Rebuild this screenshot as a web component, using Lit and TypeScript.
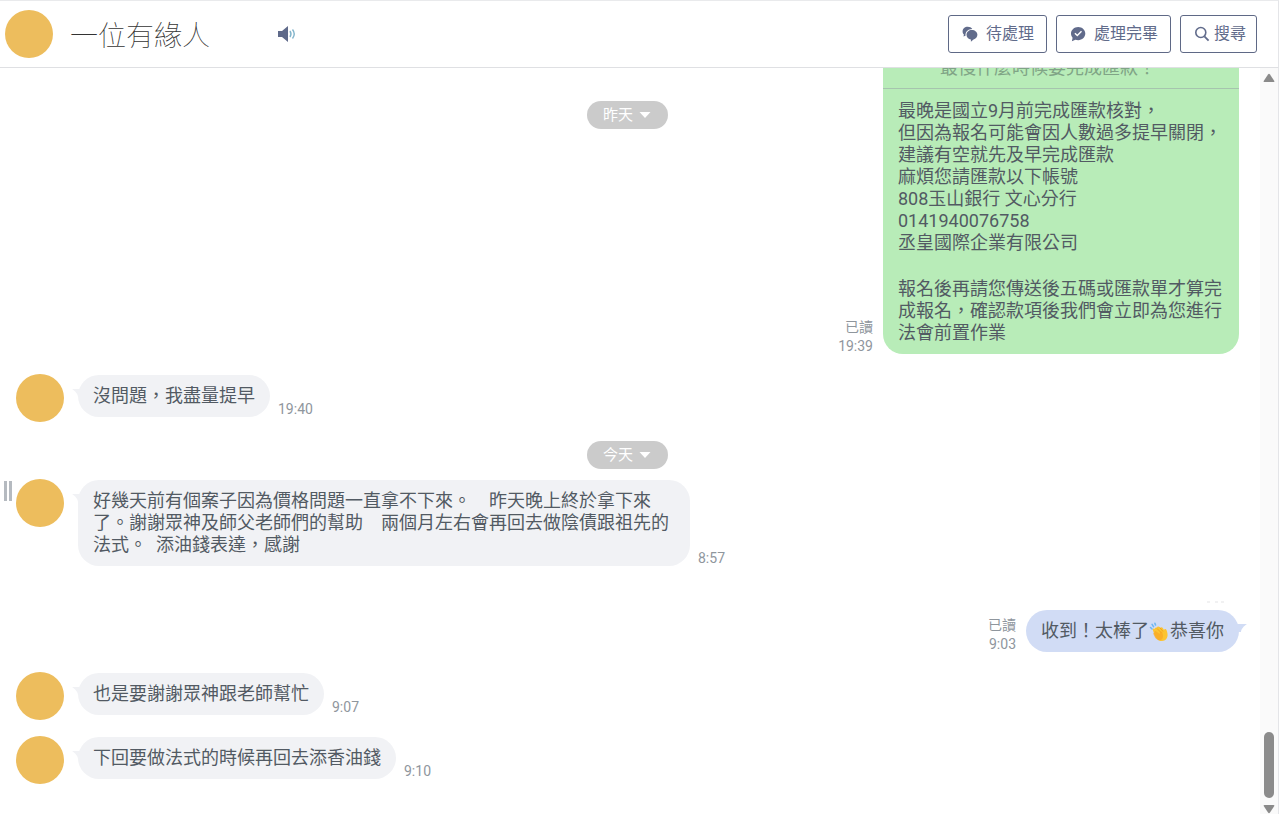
import { LitElement, html, css, svg, nothing, TemplateResult } from "lit";
import { customElement, property } from "lit/decorators.js";

const clap = html`<svg class="emoji" viewBox="0 0 20 20" role="img" aria-label="拍手">
  <path d="M1 5.5 2.6 7M2.6 2.4 4 4.6M5.4 1.2 6 3" stroke="#6fb7f2" stroke-width="1.6" stroke-linecap="round" fill="none" />
  <path d="M3.400 8.200c-.6-1 .5-2 1.400-1.400l.5.4C5 6 6.200 5 7.300 5.600c.4-1.200 1.900-1.500 2.700-.6l.8.8c.8-.9 2-.6 2.500.2l1.200 2c.3-1.200 2.200-1.200 2.600.2.800 2.400 1.600 5 .4 7.600-1.400 3.200-5 4-8 2.600C7 17.300 5.200 13.400 3.400 8.200z" fill="#fcc432" />
  <path d="M4 12.200c-.6-.9.3-1.800 1.200-1.400C4.500 9.600 5.800 8.600 6.800 9.400l3.400 2.700c-.1-1.300.2-2.600 1.500-2.600 1.500 0 1.100 1.700 1.600 2.900.6 1.700.2 4.600-1.900 5.500-2.500 1-4.700-.6-5.800-2.300z" fill="#f9a825" opacity=".75" />
  <path d="M7.500 6.500l4 4M10.500 5.800l3 3.700" stroke="#ee9a1c" stroke-width=".8" fill="none" />
</svg>`;

const icons: Record<string, TemplateResult> = {
  pending: svg`<path d="M5.700.8C2.800.8.6 2.800.6 5.400c0 1.300.5 2.300 1.300 3.100L1.500 10.500l2-.8C3.200 5.800 6 3 10.300 3 9.400 1.600 7.700.8 5.700.8z"/><path d="M9.800 4C6.800 4 4.500 6.100 4.500 8.800c0 2.500 1.900 4.400 4.400 4.800v2.200l2.600-2.300c2.300-.6 3.900-2.400 3.900-4.700C15.400 6.100 12.900 4 9.800 4z"/>`,
  done: svg`<path fill-rule="evenodd" d="M8.200 1C4.200 1 1 3.900 1 7.600c0 1.700.6 3.100 1.600 4.200L1.900 15.200l3.500-1.500c.9.300 1.800.5 2.800.5 4 0 7.100-2.900 7.100-6.600S12.200 1 8.200 1zm-.9 9.500L4.400 7.700l1-1 1.900 1.800 3.700-3.700 1 1z"/>`,
  search: svg`<circle cx="6.800" cy="6.500" r="5" fill="none" stroke="currentColor" stroke-width="1.600"/><path d="M10.400 10.300 14.600 14.600" stroke="currentColor" stroke-width="1.800"/>`,
};

@customElement("chat-message")
class ChatMessage extends LitElement {
  @property() tone: "in" | "green" | "blue" = "in";
  @property() time = "";
  @property({ type: Boolean }) wide = false;

  static styles = css`
    :host { display: block; flex: none; }
    .row { display: flex; align-items: flex-start; gap: 14px; }
    .row.out { justify-content: flex-end; }
    .avatar { width: 48px; height: 48px; border-radius: 50%; background: #edbd5d; flex: none; }
    .group { display: flex; align-items: flex-end; gap: 8px; margin-top: 1px; }
    .out .group { flex-direction: row-reverse; gap: 10px; margin-top: 0; }
    .bubble {
      position: relative; box-sizing: border-box; max-width: 612px; padding: 10px 15px;
      border-radius: 21px; background: #f1f2f5; color: #525a63;
      font-size: 18px; line-height: 22px; white-space: pre-wrap;
    }
    .wide .bubble { width: 612px; }
    .green .bubble { width: 356px; padding: 0; background: #b8ecb8; border-radius: 20px; }
    .blue .bubble { background: #d1dcf5; }
    .tail { position: absolute; top: 14px; left: -6px; width: 14px; height: 8px; fill: #f1f2f5; }
    .blue .tail { left: auto; right: -8px; fill: #d1dcf5; transform: scaleX(-1); }
    .meta {
      margin-bottom: -2px; font-size: 14px; line-height: 19px; color: #8f969d;
      text-align: right; white-space: nowrap;
    }
    .meta span, .meta time { display: block; }
  `;

  render() {
    const out = this.tone !== "in";
    return html`<div class="row ${out ? "out" : ""} ${this.tone} ${this.wide ? "wide" : ""}">
      ${out ? nothing : html`<div class="avatar"></div>`}
      <div class="group">
        <div class="bubble">${this.tone === "green" ? nothing : html`<svg class="tail" viewBox="0 0 14 8" aria-hidden="true"><path d="M0 0H14V8H6C6 5 3 2 0 0z" /></svg>`}<slot></slot></div>
        <div class="meta">${out ? html`<span>已讀</span>` : nothing}<time>${this.time}</time></div>
      </div>
    </div>`;
  }
}

@customElement("app-root")
class AppRoot extends LitElement {
  static styles = css`
    :host {
      display: flex; flex-direction: column; height: 100vh; box-sizing: border-box;
      padding-right: 1px; background: #fff; overflow: hidden;
      font-family: Roboto, "Noto Sans CJK TC", sans-serif;
    }
    .header {
      display: flex; align-items: center; flex: none; box-sizing: border-box; height: 68px;
      padding: 0 21px 0 5px; border-top: 1px solid #e9eaec; border-bottom: 1px solid #dfe0e3;
      border-right: 1px solid #e4e5e8;
    }
    .avatar { width: 48px; height: 48px; border-radius: 50%; background: #edbd5d; }
    .name {
      margin: 0 67px 0 17px; font-size: 28px; line-height: 40px; font-weight: 100; color: #333;
      font-family: "Noto Sans CJK TC", sans-serif;
    }
    .sound { padding: 0; border: 0; background: none; line-height: 0; }
    .sound svg { width: 20px; height: 18px; }
    .actions { display: flex; gap: 9px; margin-left: auto; }
    .action {
      display: flex; align-items: center; gap: 8px; box-sizing: border-box; height: 38px; padding: 0 12px 0 13px;
      border: 1px solid #5f6986; border-radius: 3px; background: #fff; color: #616b8b;
      font: 400 16px/20px Roboto, "Noto Sans CJK TC", sans-serif;
    }
    .action.search { gap: 4px; padding: 0 10px 0 13px; }
    .action svg { width: 16px; height: 16px; fill: currentColor; }
    .body { position: relative; display: flex; flex: 1; min-height: 0; border-right: 1px solid #e4e5e8; }
    .log {
      display: flex; flex-direction: column; justify-content: flex-end; flex: 1; min-width: 0;
      box-sizing: border-box; padding: 0 21px 30px 16px; overflow: hidden;
    }
    .quote {
      padding: 12px 15px 9px 57px; border-bottom: 1px solid #a6c4ae; color: #80a486;
      line-height: 22px;
    }
    .notice { padding: 11px 15px 10px; }
    .notice p { margin: 0; }
    .notice p + p { margin-top: 24px; }
    .log .quick { margin-top: 20px; }
    .log .today { margin-top: 19px; }
    .log .story { margin-top: 10px; }
    .log .reply { margin-top: 44px; }
    .log .thanks { margin-top: 20px; }
    .log .next { margin-top: 16px; }
    .sticky { position: absolute; top: 33px; left: 16px; right: 39px; display: flex; justify-content: center; }
    .day {
      display: flex; align-items: center; align-self: center; flex: none; gap: 6px; height: 28px;
      padding: 0 17px 0 16px; border: 0; border-radius: 14px; background: #cbcbcb; color: #fff;
      font: 400 15px/20px Roboto, "Noto Sans CJK TC", sans-serif;
    }
    .day svg { width: 12px; height: 6px; fill: #fff; }
    .handle { position: absolute; top: 413px; left: 4px; width: 2px; height: 20px; border: solid #b5bac0; border-width: 0 3px; }
    .more { position: absolute; top: -9px; right: 14px; width: 18px; height: 2px; fill: #f1f1f2; }
    .emoji { width: 21px; height: 20px; vertical-align: -5px; }
    .track {
      display: flex; flex-direction: column; align-items: center; flex: none; box-sizing: border-box;
      width: 18px; padding-top: 5px; background: #fafafa;
    }
    .track svg { width: 12px; height: 10px; flex: none; fill: #8a8a8a; }
    .thumb { width: 10px; height: 66px; margin: auto 0 6px; border-radius: 5px; background: #8b8b8b; }
  `;

  private day(label: string, cls = "") {
    return html`<button class="day ${cls}">${label}<svg viewBox="0 0 12 6" aria-hidden="true"><path d="M.5 0h11L6 6z" /></svg></button>`;
  }

  private action(icon: string, label: string) {
    return html`<button class="action ${icon}"><svg viewBox="0 0 16 16" aria-hidden="true">${icons[icon]}</svg>${label}</button>`;
  }

  render() {
    return html`
      <header class="header">
        <div class="avatar"></div>
        <h1 class="name">一位有緣人</h1>
        <button class="sound" aria-label="提示音">
          <svg viewBox="0 0 20 18"><path d="M1 6h4l6-5v16l-6-5H1z" fill="#5f6a8a" /><path d="M13 6q2 3 0 6M15.500 4.500q3.500 4.500 0 9" fill="none" stroke="#82b4cb" stroke-width="1.400" /></svg>
        </button>
        <div class="actions">${this.action("pending", "待處理")}${this.action("done", "處理完畢")}${this.action("search", "搜尋")}</div>
      </header>
      <main class="body">
        <div class="log">
          <chat-message tone="green" time="19:39"><div class="quote">最慢什麼時候要完成匯款！</div><div class="notice"><p>最晚是國立9月前完成匯款核對，
但因為報名可能會因人數過多提早關閉，
建議有空就先及早完成匯款
麻煩您請匯款以下帳號
808玉山銀行 文心分行
0141940076758
丞皇國際企業有限公司</p><p>報名後再請您傳送後五碼或匯款單才算完成報名，確認款項後我們會立即為您進行法會前置作業</p></div></chat-message>
          <chat-message class="quick" time="19:40">沒問題，我盡量提早</chat-message>
          ${this.day("今天", "today")}
          <chat-message class="story" wide time="8:57">好幾天前有個案子因為價格問題一直拿不下來。　昨天晚上終於拿下來
了。謝謝眾神及師父老師們的幫助　兩個月左右會再回去做陰債跟祖先的
法式。  添油錢表達，感謝</chat-message>
          <chat-message class="reply" tone="blue" time="9:03"><svg class="more" viewBox="0 0 18 2" aria-hidden="true"><path d="M0 0h3v2H0zM8 0h3v2H8zM14 0h3v2h-3z" /></svg>收到！太棒了${clap}恭喜你</chat-message>
          <chat-message class="thanks" time="9:07">也是要謝謝眾神跟老師幫忙</chat-message>
          <chat-message class="next" time="9:10">下回要做法式的時候再回去添香油錢</chat-message>
        </div>
        <div class="sticky">${this.day("昨天")}</div>
        <div class="handle"></div>
        <div class="track" aria-hidden="true">
          <svg viewBox="0 0 12 10"><path d="M5 1.500Q6 .2 7 1.500L11.300 8Q11.600 9 10.500 9h-9Q.4 9 .7 8z" /></svg>
          <div class="thumb"></div>
          <svg viewBox="0 0 12 10"><path d="M5 8.500Q6 9.800 7 8.500L11.300 2Q11.600 1 10.500 1h-9Q.4 1 .7 2z" /></svg>
        </div>
      </main>`;
  }
}
